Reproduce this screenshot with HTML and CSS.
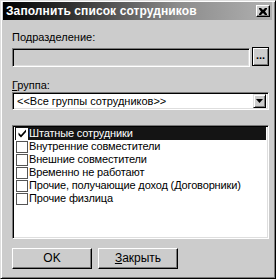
FILE: index.html
```html
<!DOCTYPE html>
<html lang="ru">
<head>
    <meta charset="UTF-8">
    <title>Заполнить список сотрудников</title>
    <link rel="stylesheet" href="styles.css">
</head>
<body>
    <div class="window">
        <div class="titlebar">
            <span class="title">Заполнить список сотрудников</span>
            <span class="close-btn">
                <svg width="8" height="7" viewBox="0 0 8 7"><path d="M0 0h2l2 2 2-2h2v1l-2 2.5 2 2.5v1h-2l-2-2-2 2h-2v-1l2-2.5-2-2.5z" fill="#000"/></svg>
            </span>
        </div>
        <div class="content">
            <div class="label label-first">Подразделение:</div>
            <div class="field-row">
                <div class="input sunken disabled"></div>
                <div class="dots-btn">...</div>
            </div>
            <div class="label label-group"><u>Г</u>руппа:</div>
            <div class="combo sunken">
                <span class="combo-text">&lt;&lt;Все группы сотрудников&gt;&gt;</span>
                <span class="combo-btn">
                    <svg width="7" height="4" viewBox="0 0 7 4"><path d="M0 0h7l-3.5 4z" fill="#000"/></svg>
                </span>
            </div>
            <div class="list sunken">
                <div class="item selected"><span class="check checked"><svg width="9" height="9" viewBox="0 0 9 9"><path d="M0.5 3.5l2.5 2.5 5-5.5v2.5l-5 5.5-2.5-2.5z" fill="#000"/></svg></span>Штатные сотрудники</div>
                <div class="item"><span class="check"></span>Внутренние совместители</div>
                <div class="item"><span class="check"></span>Внешние совместители</div>
                <div class="item"><span class="check"></span>Временно не работают</div>
                <div class="item"><span class="check"></span>Прочие, получающие доход (Договорники)</div>
                <div class="item"><span class="check"></span>Прочие физлица</div>
            </div>
            <div class="buttons">
                <div class="btn">OK</div>
                <div class="btn"><u>З</u>акрыть</div>
            </div>
        </div>
    </div>
</body>
</html>
```

FILE: styles.css
```css
body {
    margin: 0;
    background-color: #cccccc;
    font-family: 'Liberation Sans', Arial, sans-serif;
    font-size: 11px;
    color: #000;
}
.window {
    width: 276px;
    height: 279px;
    box-sizing: border-box;
    border: 1px solid;
    border-color: #dedede #000 #000 #dedede;
    box-shadow: inset 1px 1px #fff, inset -1px -1px #7a7a7a;
    padding: 1px 3px 0 2px;
    background-color: #cccccc;
}
.titlebar {
    height: 18px;
    background: linear-gradient(to right, #000 0%, #303030 25%, #8c8c8c 65%, #b0b0b0 100%);
    display: flex;
    align-items: center;
    justify-content: space-between;
    padding: 0 2px 0 3px;
}
.title {
    color: #fff;
    font-weight: bold;
    font-size: 12px;
    letter-spacing: 0.1px;
}
.close-btn {
    width: 14px;
    height: 12px;
    box-sizing: border-box;
    background-color: #cccccc;
    border: 1px solid;
    border-color: #fff #000 #000 #fff;
    box-shadow: inset -1px -1px #7a7a7a;
    display: flex;
    align-items: center;
    justify-content: center;
}
.content {
    padding: 0 3px 0 9px;
}
.label {
    height: 13px;
    line-height: 13px;
}
.label-first {
    margin-top: 11px;
}
.label-group {
    margin-top: 12px;
}
.sunken {
    box-sizing: border-box;
    border: 1px solid;
    border-color: #7a7a7a #fff #fff #7a7a7a;
    box-shadow: inset 1px 1px #000, inset -1px -1px #dedede;
}
.field-row {
    display: flex;
    gap: 2px;
    margin-top: 4px;
}
.input {
    width: 238px;
    height: 19px;
}
.disabled {
    background-color: #cccccc;
}
.dots-btn {
    width: 17px;
    height: 19px;
    margin-top: -1px;
    box-sizing: border-box;
    border: 1px solid #000;
    box-shadow: inset 1px 1px #fff, inset -1px -1px #7a7a7a;
    background-color: #cccccc;
    font-weight: bold;
    text-align: center;
    line-height: 14px;
}
.combo {
    height: 18px;
    background-color: #fff;
    display: flex;
    align-items: center;
    justify-content: space-between;
    padding: 1px 2px 1px 4px;
}
.combo-btn {
    width: 13px;
    height: 14px;
    box-sizing: border-box;
    background-color: #cccccc;
    border: 1px solid;
    border-color: #dedede #000 #000 #dedede;
    box-shadow: inset 1px 1px #fff, inset -1px -1px #7a7a7a;
    display: flex;
    align-items: center;
    justify-content: center;
}
.list {
    height: 114px;
    margin-top: 15px;
    background-color: #fff;
    padding: 1px 2px 0 2px;
}
.item {
    height: 13px;
    line-height: 13px;
    display: flex;
    align-items: center;
    white-space: nowrap;
    padding-left: 1px;
    letter-spacing: -0.15px;
}
.item.selected {
    background-color: #141414;
    color: #fff;
}
.check {
    width: 12px;
    height: 12px;
    box-sizing: border-box;
    border: 1px solid #555;
    background-color: #fff;
    margin-right: 1px;
    display: flex;
    align-items: center;
    justify-content: center;
}
.check.checked {
    border-color: #fff;
}
.buttons {
    display: flex;
    gap: 6px;
    margin-top: 9px;
}
.btn {
    width: 80px;
    height: 21px;
    box-sizing: border-box;
    border: 1px solid;
    border-color: #fff #000 #000 #fff;
    box-shadow: inset -1px -1px #7a7a7a;
    text-align: center;
    line-height: 18px;
    font-size: 12px;
}
```
